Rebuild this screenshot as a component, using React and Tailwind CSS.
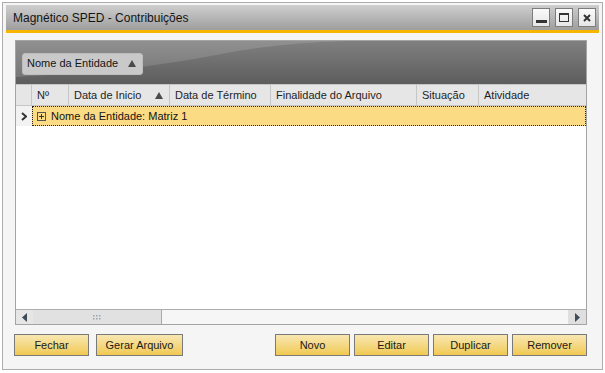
import React from "react";

function WinBtn({ children }) {
  return (
    <div className="w-[18px] h-[19px] border border-[#7c7c7c] bg-gradient-to-b from-[#fafafa] to-[#e6e6e6] flex items-center justify-center">
      {children}
    </div>
  );
}

function Btn({ label, w = "w-[75px]" }) {
  return (
    <div
      className={`${w} h-[22px] border border-[#7a7a7a] bg-gradient-to-b from-[#f8e7b0] to-[#f1c94f] flex items-center justify-center text-[11px] text-[#1a1a1a]`}
    >
      {label}
    </div>
  );
}

function Tri({ className = "" }) {
  return (
    <svg width="8" height="7" viewBox="0 0 8 7" className={className}>
      <polygon points="4,0 8,7 0,7" fill="#4a4a4a" />
    </svg>
  );
}

export default function App() {
  const cols = [
    { label: "Nº", w: "w-[37px]" },
    { label: "Data de Inicio", w: "w-[101px]", sort: true },
    { label: "Data de Término", w: "w-[101px]" },
    { label: "Finalidade do Arquivo", w: "w-[146px]" },
    { label: "Situação", w: "w-[62px]" },
  ];
  return (
    <div
      className="w-[605px] h-[373px] bg-white pt-[2px] pl-[2px]"
      style={{ fontFamily: '"Liberation Sans", Arial, sans-serif' }}
    >
      <div className="w-[601px] h-[368px] border border-[#adadad] bg-[#f5f5f5] flex flex-col">
        {/* Title bar */}
        <div className="mx-[3px] mt-[2px] h-[25px] bg-gradient-to-b from-[#cfcfcf] to-[#9e9e9e] flex items-center pl-[7px] pr-[3px]">
          <span className="text-[12px] text-[#141414]">Magnético SPED - Contribuições</span>
          <div className="ml-auto flex gap-[5px]">
            <WinBtn>
              <div className="w-[11px] h-[3px] bg-[#333] mt-[7px]" />
            </WinBtn>
            <WinBtn>
              <div className="w-[10px] h-[9px] border border-[#333] border-t-2" />
            </WinBtn>
            <WinBtn>
              <svg width="8" height="8" viewBox="0 0 8 8">
                <path d="M1 1 L7 7 M7 1 L1 7" stroke="#333" strokeWidth="2" />
              </svg>
            </WinBtn>
          </div>
        </div>
        <div className="mx-[3px] h-[3px] bg-[#f6b500]" />

        {/* Grid panel */}
        <div className="ml-[12px] mt-[7px] w-[572px] h-[285px] border border-[#a4a4a4] bg-white flex flex-col">
          {/* group-by area */}
          <div className="relative h-[43px] bg-gradient-to-b from-[#808080] to-[#5d5d5d] flex items-center px-[6px] overflow-hidden">
            <svg className="absolute inset-0" width="570" height="43" viewBox="0 0 570 43">
              <path d="M0 0 L0 36 Q 120 30 200 14 Q 260 2 330 0 Z" fill="#ffffff" fillOpacity="0.13" />
            </svg>
            <div className="relative mt-[2px] h-[22px] w-[121px] rounded-[3px] bg-[#c9c9c9] border border-[#bdbdbd] flex items-center pl-[4px] pr-[6px] text-[11px] text-[#141414]">
              <span>Nome da Entidade</span>
              <Tri className="ml-auto" />
            </div>
          </div>
          {/* header */}
          <div className="h-[22px] bg-[#e6e6e6] border-t border-b border-[#c6c6c6] flex text-[11px] text-[#1e1e1e]">
            <div className="w-[16px] border-r border-[#c6c6c6]" />
            {cols.map((c) => (
              <div key={c.label} className={`${c.w} border-r border-[#c6c6c6] flex items-center pl-[5px] pr-[6px]`}>
                <span>{c.label}</span>
                {c.sort && <Tri className="ml-auto" />}
              </div>
            ))}
            <div className="flex-1 flex items-center pl-[5px]">Atividade</div>
          </div>
          {/* group row */}
          <div className="h-[20px] flex">
            <div className="w-[16px] bg-[#f2f2f2] flex items-center justify-center">
              <svg width="6" height="9" viewBox="0 0 6 9">
                <path d="M1 1 L5 4.5 L1 8" stroke="#333" strokeWidth="2" fill="none" />
              </svg>
            </div>
            <div className="flex-1 bg-[#fbdb84] border border-dotted border-[#222] flex items-center pl-[4px] text-[11px] text-[#141414]">
              <div className="w-[9px] h-[9px] border border-[#555] bg-[#fbdb84] flex items-center justify-center mr-[5px]">
                <svg width="7" height="7" viewBox="0 0 7 7">
                  <path d="M1 3.5 H6 M3.5 1 V6" stroke="#333" strokeWidth="1" />
                </svg>
              </div>
              <span>Nome da Entidade: Matriz 1</span>
            </div>
          </div>
          <div className="flex-1" />
          {/* horizontal scrollbar */}
          <div className="h-[15px] border-t border-[#adadad] bg-[#f6f6f6] flex">
            <div className="w-[17px] bg-[#e6e6e6] flex items-center justify-center">
              <svg width="5" height="9" viewBox="0 0 5 9">
                <polygon points="5,0 5,9 0,4.5" fill="#3e4b58" />
              </svg>
            </div>
            <div className="w-[129px] bg-[#e1e1e1] border-r border-[#a9a9a9] flex items-center justify-center">
              <svg width="8" height="6" viewBox="0 0 8 6">
                {[0, 3, 6].map((x) =>
                  [0, 3].map((y) => <rect key={`${x}-${y}`} x={x} y={y + 1} width="1.5" height="1.5" fill="#9aa4b0" />)
                )}
              </svg>
            </div>
            <div className="flex-1" />
            <div className="w-[18px] bg-[#dfdfdf] flex items-center justify-center">
              <svg width="5" height="9" viewBox="0 0 5 9">
                <polygon points="0,0 0,9 5,4.5" fill="#3e4b58" />
              </svg>
            </div>
          </div>
        </div>

        {/* Buttons */}
        <div className="ml-[11px] mt-[9px] w-[573px] flex justify-between">
          <div className="flex gap-[7px]">
            <Btn label="Fechar" />
            <Btn label="Gerar Arquivo" w="w-[87px]" />
          </div>
          <div className="flex gap-[4px]">
            <Btn label="Novo" />
            <Btn label="Editar" />
            <Btn label="Duplicar" />
            <Btn label="Remover" />
          </div>
        </div>
      </div>
    </div>
  );
}
